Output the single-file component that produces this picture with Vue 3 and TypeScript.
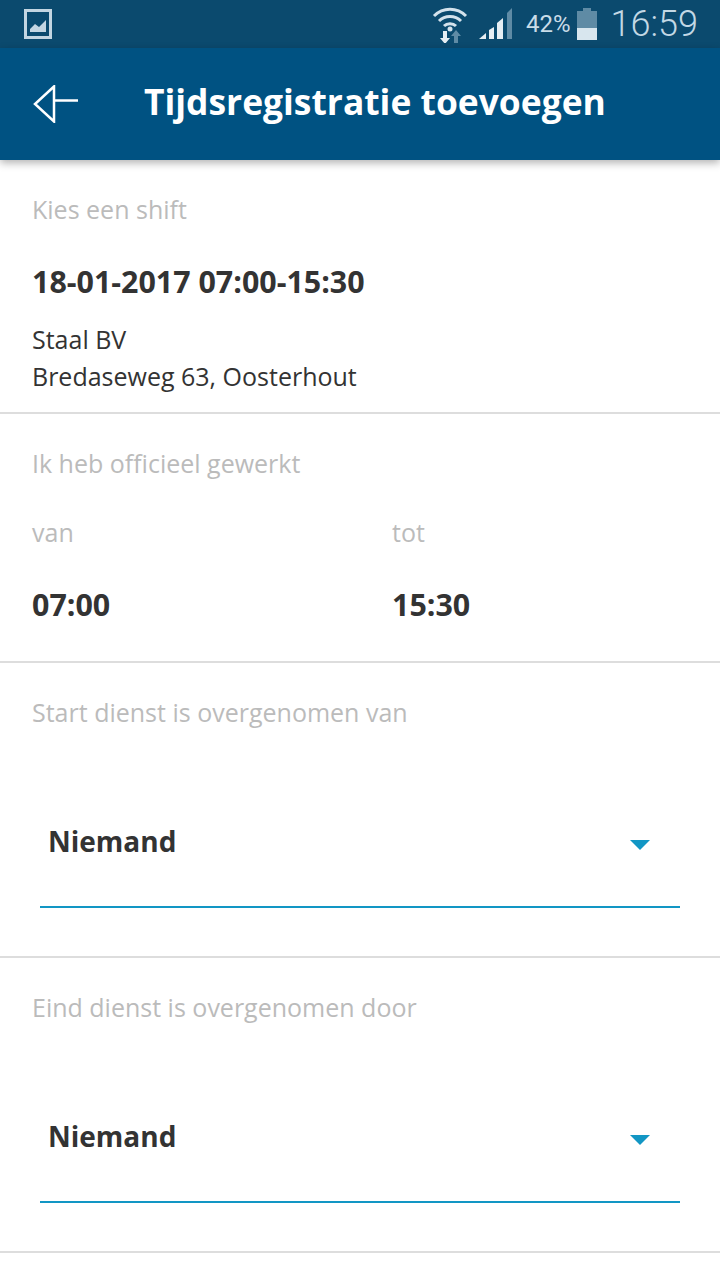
<template>
  <div class="screen">
    <div class="status-bar">
      <svg class="pic-icon" width="28" height="30" viewBox="0 0 28 30">
        <rect x="1.5" y="1.5" width="25" height="27" fill="none" stroke="#c3d6e2" stroke-width="3" />
        <path d="M6 23 L6 20 L11 15 L15 18 L22 11 L22 23 Z" fill="#c3d6e2" />
      </svg>
      <div class="status-right">
        <svg class="wifi" width="36" height="38" viewBox="0 0 36 38">
          <path d="M2 11 C11 2 25 2 34 11" fill="none" stroke="#d3e2ec" stroke-width="3" />
          <path d="M7 16 C13 10 23 10 29 16" fill="none" stroke="#d3e2ec" stroke-width="3" />
          <path d="M12 21 C15 18 21 18 24 21" fill="none" stroke="#d3e2ec" stroke-width="3" />
          <circle cx="18" cy="24" r="2.5" fill="#d3e2ec" />
          <path d="M11 26 H15 V33 H18 L13 39 L8 33 H11 Z" fill="#e6eef3" />
          <path d="M22 38 V31 H19 L24 25 L29 31 H26 V38 Z" fill="#5f8ba5" />
        </svg>
        <svg class="signal" width="34" height="32" viewBox="0 0 34 32">
          <path d="M0 31 L7 25 V31 Z" fill="#e6eef3" />
          <path d="M10 22 L15 19 V31 H10 Z" fill="#e6eef3" />
          <path d="M18 15 L24 10 V31 H18 Z" fill="#e6eef3" />
          <path d="M28 5 L33 0 V31 H28 Z" fill="#5f8ba5" />
        </svg>
        <span class="battery-pct">42%</span>
        <div class="battery">
          <div class="battery-cap"></div>
          <div class="battery-body"><div class="battery-fill" :style="{ height: batteryLevel + '%' }"></div></div>
        </div>
        <span class="clock">16:59</span>
      </div>
    </div>

    <header class="app-header">
      <svg class="back" width="46" height="38" viewBox="0 0 46 38">
        <path d="M21 1.5 L2 19 L21 36.5 Z" fill="none" stroke="#fff" stroke-width="2.5" />
        <path d="M21 15.5 H45" stroke="#fff" stroke-width="2.5" />
      </svg>
      <h1>Tijdsregistratie toevoegen</h1>
    </header>

    <section class="shift">
      <div class="label">Kies een shift</div>
      <div class="shift-date">18-01-2017 07:00-15:30</div>
      <div class="shift-address">
        <div>Staal BV</div>
        <div>Bredaseweg 63, Oosterhout</div>
      </div>
    </section>

    <section class="worked">
      <div class="label">Ik heb officieel gewerkt</div>
      <div class="times">
        <div v-for="t in times" :key="t.label">
          <div class="label">{{ t.label }}</div>
          <div class="time-value">{{ t.value }}</div>
        </div>
      </div>
    </section>

    <section v-for="s in handovers" :key="s" class="handover">
      <div class="label">{{ s }}</div>
      <div class="select">
        <span>Niemand</span>
        <i class="caret"></i>
      </div>
    </section>
  </div>
</template>

<script setup lang="ts">
const batteryLevel = 42

const times = [
  { label: 'van', value: '07:00' },
  { label: 'tot', value: '15:30' }
]

const handovers = ['Start dienst is overgenomen van', 'Eind dienst is overgenomen door']
</script>

<style>
  body {
    background: #fff;
  }
</style>

<style scoped>
  .screen {
    width: 720px;
    height: 1280px;
    overflow: hidden;
    background: #fff;
    font-family: "Open Sans", "Noto Sans", sans-serif;
    color: #333;
  }

  .status-bar {
    height: 48px;
    background: #0b4a6e;
    display: flex;
    justify-content: space-between;
    align-items: center;
    padding: 0 22px 0 24px;
  }

  .status-right {
    display: flex;
    align-items: center;
  }

  .wifi {
    margin-right: 11px;
  }

  .signal {
    margin-right: 13px;
  }

  .battery-pct {
    font-family: "Roboto", sans-serif;
    font-size: 24px;
    color: #c9dce8;
    margin-right: 6px;
  }

  .battery {
    width: 20px;
    height: 32px;
    display: flex;
    flex-direction: column;
    align-items: center;
    margin-right: 14px;
  }

  .battery-cap {
    width: 8px;
    height: 3px;
    background: #5f8ba5;
  }

  .battery-body {
    width: 20px;
    flex: 1;
    background: #5f8ba5;
    display: flex;
    align-items: flex-end;
  }

  .battery-fill {
    width: 100%;
    background: #d8e6ee;
  }

  .clock {
    font-family: "Roboto", sans-serif;
    font-weight: 300;
    font-size: 36px;
    color: #c3d8e5;
  }

  .app-header {
    height: 112px;
    background: #005282;
    display: flex;
    align-items: center;
    padding-left: 33px;
    box-shadow: 0 3px 8px rgba(0, 0, 0, 0.3);
    position: relative;
  }

  .app-header h1 {
    margin: 0 0 6px 65px;
    color: #fff;
    font-size: 35.4px;
    font-weight: 700;
    white-space: nowrap;
  }

  section {
    border-bottom: 2px solid #ddd;
    padding: 0 32px;
    box-sizing: border-box;
  }

  .label {
    color: #bbb;
    font-size: 25px;
    line-height: 36px;
  }

  .shift {
    height: 254px;
    padding-top: 31px;
  }

  .shift-date {
    margin-top: 35px;
    font-size: 30.4px;
    font-weight: 700;
    line-height: 40px;
  }

  .shift-address {
    margin-top: 19px;
    font-size: 25px;
    line-height: 37px;
  }

  .worked {
    height: 249px;
    padding-top: 31px;
  }

  .times {
    display: grid;
    grid-template-columns: 360px 1fr;
    margin-top: 33px;
  }

  .time-value {
    margin-top: 35px;
    font-size: 30.4px;
    font-weight: 700;
    line-height: 40px;
  }

  .handover {
    height: 295px;
    padding-top: 31px;
  }

  .select {
    margin: 91px 8px 0;
    height: 85px;
    border-bottom: 2px solid #1296c4;
    display: flex;
    justify-content: space-between;
    align-items: flex-start;
    padding: 0 30px 0 8px;
    font-size: 28px;
    font-weight: 700;
    line-height: 40px;
  }

  .caret {
    margin-top: 19px;
    width: 0;
    height: 0;
    border-left: 10px solid transparent;
    border-right: 10px solid transparent;
    border-top: 10px solid #1296c4;
  }
</style>
